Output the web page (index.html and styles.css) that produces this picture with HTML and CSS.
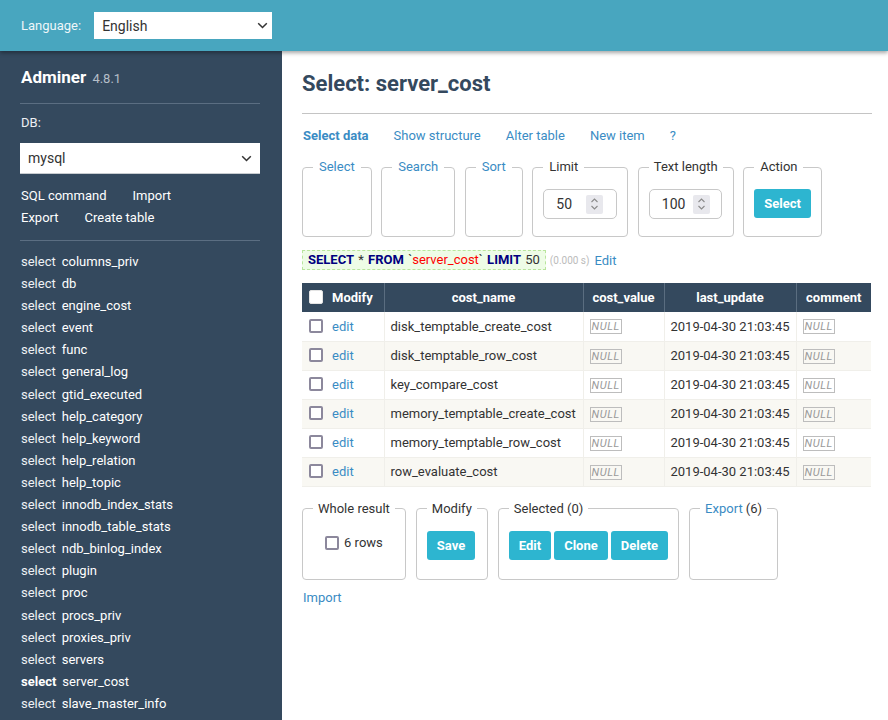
FILE: index.html
```html
<!DOCTYPE html>
<html lang="en">
<head>
<meta charset="utf-8">
<title>Select: server_cost - Adminer</title>
<link rel="stylesheet" href="styles.css">
</head>
<body>
<header class="topbar">
  <span class="lang-label">Language:</span>
  <div class="dropdown lang-select">
    <span>English</span>
    <svg class="chev" width="11" height="7" viewBox="0 0 11 7"><path d="M1.2 1.2 L5.5 5.5 L9.8 1.2" fill="none" stroke="#333" stroke-width="1.5"/></svg>
  </div>
</header>
<div class="layout">
  <nav class="sidebar">
    <h1 class="brand"><span class="brand-name">Adminer</span> <span class="version">4.8.1</span></h1>
    <hr class="side-hr">
    <div class="db-label">DB:</div>
    <div class="dropdown db-select">
      <span>mysql</span>
      <svg class="chev" width="11" height="7" viewBox="0 0 11 7"><path d="M1.2 1.2 L5.5 5.5 L9.8 1.2" fill="none" stroke="#333" stroke-width="1.5"/></svg>
    </div>
    <div class="side-links">
      <div><a>SQL command</a><a>Import</a></div>
      <div><a>Export</a><a>Create table</a></div>
    </div>
    <hr class="side-hr">
    <ul class="tables">
      <li><span class="sel">select</span>columns_priv</li>
      <li><span class="sel">select</span>db</li>
      <li><span class="sel">select</span>engine_cost</li>
      <li><span class="sel">select</span>event</li>
      <li><span class="sel">select</span>func</li>
      <li><span class="sel">select</span>general_log</li>
      <li><span class="sel">select</span>gtid_executed</li>
      <li><span class="sel">select</span>help_category</li>
      <li><span class="sel">select</span>help_keyword</li>
      <li><span class="sel">select</span>help_relation</li>
      <li><span class="sel">select</span>help_topic</li>
      <li><span class="sel">select</span>innodb_index_stats</li>
      <li><span class="sel">select</span>innodb_table_stats</li>
      <li><span class="sel">select</span>ndb_binlog_index</li>
      <li><span class="sel">select</span>plugin</li>
      <li><span class="sel">select</span>proc</li>
      <li><span class="sel">select</span>procs_priv</li>
      <li><span class="sel">select</span>proxies_priv</li>
      <li><span class="sel">select</span>servers</li>
      <li><span class="sel active">select</span>server_cost</li>
      <li><span class="sel">select</span>slave_master_info</li>
    </ul>
  </nav>
  <main class="content">
    <h2 class="title">Select: server_cost</h2>
    <hr class="main-hr">
    <div class="tabs"><a class="current">Select data</a><a>Show structure</a><a>Alter table</a><a>New item</a><a>?</a></div>
    <div class="fs-row top-row">
      <fieldset class="fs"><legend class="lg link">Select</legend></fieldset>
      <fieldset class="fs"><legend class="lg link">Search</legend></fieldset>
      <fieldset class="fs"><legend class="lg link">Sort</legend></fieldset>
      <fieldset class="fs"><legend class="lg">Limit</legend>
        <div class="num num-limit"><span>50</span><span class="spin"><svg width="9" height="14" viewBox="0 0 9 14"><path d="M1.5 5 L4.5 2 L7.5 5 M1.5 9 L4.5 12 L7.5 9" fill="none" stroke="#8a8a8a" stroke-width="1.1"/></svg></span></div>
      </fieldset>
      <fieldset class="fs"><legend class="lg lg-tight">Text length</legend>
        <div class="num num-text"><span>100</span><span class="spin"><svg width="9" height="14" viewBox="0 0 9 14"><path d="M1.5 5 L4.5 2 L7.5 5 M1.5 9 L4.5 12 L7.5 9" fill="none" stroke="#8a8a8a" stroke-width="1.1"/></svg></span></div>
      </fieldset>
      <fieldset class="fs"><legend class="lg">Action</legend>
        <button class="btn">Select</button>
      </fieldset>
    </div>
    <div class="sql-line">
      <code class="sql"><b class="kw">SELECT</b> * <b class="kw">FROM</b> `<span class="ident">server_cost</span>` <b class="kw">LIMIT</b> 50</code>
      <span class="time">(0.000 s)</span>
      <a class="edit-sql">Edit</a>
    </div>
    <table class="data">
      <thead>
        <tr>
          <th class="c-mod"><span class="cb cb-head"></span>Modify</th>
          <th class="c-name">cost_name</th>
          <th class="c-val">cost_value</th>
          <th class="c-upd">last_update</th>
          <th class="c-com">comment</th>
        </tr>
      </thead>
      <tbody>
        <tr><td><span class="cb"></span><a>edit</a></td><td>disk_temptable_create_cost</td><td><i class="null">NULL</i></td><td>2019-04-30 21:03:45</td><td><i class="null">NULL</i></td></tr>
        <tr><td><span class="cb"></span><a>edit</a></td><td>disk_temptable_row_cost</td><td><i class="null">NULL</i></td><td>2019-04-30 21:03:45</td><td><i class="null">NULL</i></td></tr>
        <tr><td><span class="cb"></span><a>edit</a></td><td>key_compare_cost</td><td><i class="null">NULL</i></td><td>2019-04-30 21:03:45</td><td><i class="null">NULL</i></td></tr>
        <tr><td><span class="cb"></span><a>edit</a></td><td>memory_temptable_create_cost</td><td><i class="null">NULL</i></td><td>2019-04-30 21:03:45</td><td><i class="null">NULL</i></td></tr>
        <tr><td><span class="cb"></span><a>edit</a></td><td>memory_temptable_row_cost</td><td><i class="null">NULL</i></td><td>2019-04-30 21:03:45</td><td><i class="null">NULL</i></td></tr>
        <tr><td><span class="cb"></span><a>edit</a></td><td>row_evaluate_cost</td><td><i class="null">NULL</i></td><td>2019-04-30 21:03:45</td><td><i class="null">NULL</i></td></tr>
      </tbody>
    </table>
    <div class="fs-row bottom-row">
      <fieldset class="fs fs-whole"><legend class="lg">Whole result</legend>
        <label class="rows-label"><span class="cb"></span>6 rows</label>
      </fieldset>
      <fieldset class="fs"><legend class="lg">Modify</legend>
        <button class="btn">Save</button>
      </fieldset>
      <fieldset class="fs"><legend class="lg">Selected (0)</legend>
        <div class="btns"><button class="btn">Edit</button><button class="btn">Clone</button><button class="btn">Delete</button></div>
      </fieldset>
      <fieldset class="fs"><legend class="lg"><a>Export</a> (6)</legend></fieldset>
    </div>
    <p class="import"><a>Import</a></p>
  </main>
</div>
</body>
</html>
```

FILE: styles.css
```css
* { box-sizing: border-box; }
html, body { margin: 0; padding: 0; }
body {
  font-family: Roboto, "Liberation Sans", sans-serif;
  font-size: 13px;
  color: #333;
  background: #fff;
}
a { color: #3a8cc4; text-decoration: none; cursor: pointer; }

.topbar {
  position: relative;
  z-index: 2;
  height: 51px;
  background: #48a6bf;
  display: flex;
  align-items: center;
  padding-left: 21px;
  box-shadow: 0 2px 4px rgba(0, 0, 0, 0.35);
}
.lang-label { color: #eef6f9; font-size: 13px; }

.dropdown {
  display: flex;
  align-items: center;
  justify-content: space-between;
  background: #fff;
  color: #333;
  font-size: 14px;
}
.lang-select {
  margin-left: 13px;
  width: 178px;
  height: 27px;
  padding: 0 4px 0 8px;
}
.chev { display: block; }

.layout {
  display: flex;
  min-height: calc(100vh - 51px);
}
.sidebar {
  width: 282px;
  flex: none;
  background: #34495e;
  color: #edf0f3;
  padding: 15px 22px 0 20px;
}
.brand {
  margin: 0;
  line-height: 22px;
  font-size: 17px;
}
.brand-name { color: #fff; font-weight: 700; padding-left: 1px; }
.version { color: #b4bec8; font-size: 13px; font-weight: 400; margin-left: 2px; }
.side-hr {
  border: 0;
  border-top: 1px solid #5b6e82;
  margin: 13px 0 0;
  height: 0;
}
.db-label { margin-top: 10px; line-height: 18px; padding-left: 1px; }
.db-select {
  margin-top: 11px;
  height: 31px;
  padding: 0 8px 0 8px;
  border-bottom: 1px solid #c8ccd0;
}
.side-links { margin-top: 11px; line-height: 22px; padding-left: 1px; }
.side-links a { color: #fff; margin-right: 26px; }
.side-links + .side-hr { margin-top: 11px; }
.tables {
  list-style: none;
  margin: 10px 0 0;
  padding: 0 0 0 1px;
  line-height: 22.1px;
  white-space: nowrap;
}
.tables li { color: #fff; }
.sel { margin-right: 6px; color: #eef1f4; }
.sel.active { font-weight: 700; color: #fff; }

.content {
  flex: 1;
  padding: 20px 16px 0 20px;
  min-width: 0;
}
.title {
  margin: 0;
  font-size: 22px;
  line-height: 25px;
  font-weight: 700;
  color: #34495e;
}
.main-hr {
  border: 0;
  border-top: 1px solid #c4c4c4;
  margin: 17px 0 0;
  height: 0;
}
.tabs { margin-top: 12px; line-height: 20px; padding-left: 1px; }
.tabs a { margin-right: 25px; }
.tabs a.current { font-weight: 700; }

.fs-row {
  display: flex;
  align-items: stretch;
  gap: 10px;
  margin-top: 13px;
}
.top-row { gap: 9.5px; }
.fs {
  margin: 0;
  border: 1px solid #c8c8c8;
  border-radius: 4px;
  padding: 14px 10px 17px;
  min-width: 0;
  flex: none;
}
.lg {
  padding: 0 5px;
  line-height: 16px;
  font-size: 13px;
  color: #333;
  white-space: nowrap;
}
.top-row .lg { padding: 0 6px; }
.top-row .lg-tight { padding: 0 5px; }
.lg.link { color: #3a8cc4; }

.num {
  display: flex;
  align-items: center;
  height: 30px;
  border: 1px solid #c8c8c8;
  border-radius: 5px;
  font-size: 14px;
  color: #333;
}
.num-limit { width: 74px; padding-left: 12px; }
.num-text { width: 73px; padding-left: 12px; }
.spin {
  margin-left: auto;
  margin-right: 13px;
  width: 17px;
  height: 19px;
  background: #e8e8ed;
  border-radius: 2px;
  display: flex;
  align-items: center;
  justify-content: center;
}
.num-text .spin { margin-right: 11px; }

.btn {
  font-family: inherit;
  font-size: 13px;
  font-weight: 700;
  color: #fff;
  background: #2db5d0;
  border: 0;
  border-radius: 3px;
  height: 29px;
  padding: 0 10px;
  cursor: pointer;
}
.btns { display: flex; gap: 3px; }

.sql-line {
  margin-top: 13px;
  display: flex;
  align-items: center;
}
.sql {
  font-family: inherit;
  font-size: 13px;
  line-height: 18px;
  background: #eefce6;
  border: 1px dashed #b9e59d;
  padding: 0 5px;
  color: #333;
  word-spacing: 1px;
}
.kw { color: #00007f; font-weight: 700; }
.ident { color: #f00; }
.time { color: #bbb; font-size: 10px; margin-left: 4px; }
.edit-sql { margin-left: 5px; }

.data {
  margin-top: 13px;
  border-collapse: collapse;
  width: 569px;
  table-layout: fixed;
}
.data th {
  background: #34495e;
  color: #fff;
  font-weight: 700;
  height: 29px;
  padding: 0 6px;
  text-align: center;
  border-left: 1px solid #5a6d80;
  white-space: nowrap;
}
.data th:first-child { border-left: 0; }
.c-mod { width: 82px; text-align: left !important; padding-left: 7px !important; }
.c-name { width: 199px; }
.c-val { width: 81px; }
.c-upd { width: 132px; }
.c-com { width: 75px; }
.data td {
  height: 29px;
  padding: 0 6px;
  border: 1px solid #f0efea;
  white-space: nowrap;
  vertical-align: middle;
}
.data td:first-child { padding-left: 7px; border-left: 0; }
.data td:last-child { border-right: 0; }
.data tbody tr:nth-child(even) td { background: #f9f8f3; }
.data tbody tr:first-child td { border-top: 0; }

.cb {
  display: inline-block;
  width: 14px;
  height: 14px;
  border: 2px solid #8c889c;
  border-radius: 2px;
  background: #fff;
  vertical-align: -2px;
  margin-right: 9px;
}
.cb-head { border-color: #e4e4e4; border-width: 1px; }

.null {
  display: inline-block;
  font-style: italic;
  font-size: 11px;
  line-height: 13px;
  color: #9a9a9a;
  border: 1px solid #bdbdbd;
  padding: 0 1px;
  letter-spacing: 0.6px;
}

.bottom-row { margin-top: 14px; }
.bottom-row .fs { padding-bottom: 19px; }
.fs-whole { text-align: center; }
.rows-label { display: inline-block; line-height: 22px; margin-top: 1px; }
.rows-label .cb { margin-right: 5px; vertical-align: -3px; }

.import { margin: 9px 0 0; line-height: 18px; padding-left: 1px; }
```
